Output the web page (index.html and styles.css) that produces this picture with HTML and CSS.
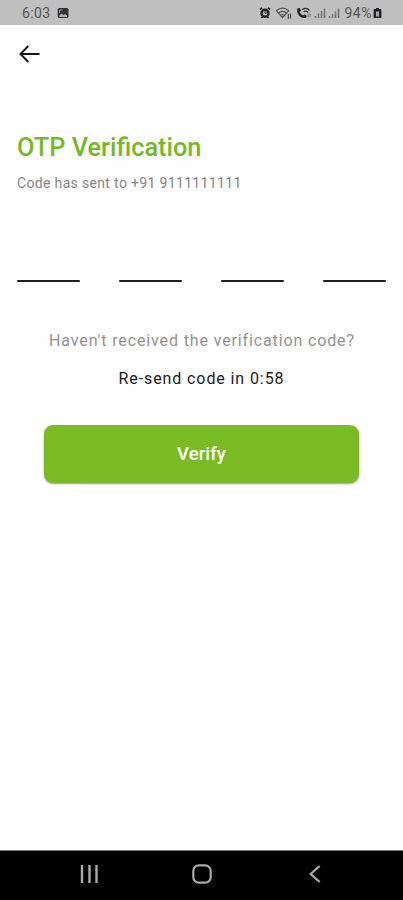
FILE: index.html
```html
<!DOCTYPE html>
<html lang="en">
<head>
<meta charset="utf-8">
<meta name="viewport" content="width=device-width, initial-scale=1">
<title>OTP Verification</title>
<link rel="stylesheet" href="styles.css">
</head>
<body>
<div class="screen">
  <header class="status">
    <span class="clock">6:03</span>
    <svg class="photo" width="12" height="12" viewBox="0 0 12 12"><rect x=".7" y="1" width="10.800" height="10" rx="1.600" fill="#333"/><path d="M2.300 8.500 4.500 6.500l2 1.500 1.700-1 1.800 1.600V10H2.300z" fill="#b0b0b0"/><path d="M2.600 6V3h3" fill="none" stroke="#999"/></svg>
    <svg class="indicators" width="82" height="14" viewBox="0 0 82 14">
      <g fill="none" stroke="#252525">
        <circle cx="6" cy="7.2" r="3.5" stroke-width="2.4"/>
        <path d="M1 3.5 3 2M11 3.5 9 2M2.5 12l1.3-1.3M9.500 12l-1.300-1.300" stroke-width="1.7"/>
        <path d="M6 5.200v2.300l1.700-.8" stroke-width="1"/>
      </g>
      <g fill="none" stroke="#555" stroke-width="1.200">
        <path d="M17.200 4.700q6.300-5 12.600 0M19.200 7.200q4.300-3.500 8.600 0M21.500 9.500q2-1.700 4 0M17.200 4.700l6.300 6.800 6.300-6.800"/>
        <path d="M29.300 8v5M31.500 7.500v5" stroke="#444"/>
      </g>
      <path d="M38.300 2.600 40.500 2l1.500 2.600-1.400 1.400q1 2.400 3.300 3.500l1.500-1.300 2.400 1.600-.8 2.200q-4.800.7-7.500-3.200-2-2.800-1.200-6.200z" fill="#222"/>
      <path d="M43 3.500q5-2.500 7.500 1M44.500 5.700q3-1.300 4.700.8" fill="none" stroke="#333" stroke-width="1.300"/>
      <path d="M49 8v3.500M51 7v4.500" fill="none" stroke="#777"/>
      <g fill="none" stroke="#707070" stroke-width="1.500">
        <path d="M56.500 12v-2M59.500 12V7.500M62.500 12V5M65.500 12V2.500"/>
        <path d="M70.500 12v-2M73.500 12V8M76.500 12V5.500M79.500 12V2.500"/>
      </g>
    </svg>
    <span class="percent">94%</span>
    <svg class="battery" width="9" height="12" viewBox="0 0 9 12"><path d="M3 1h3v1h1.500q.9 0 .9.700v7.600q0 .7-.7.700h-6.400q-.7 0-.7-.7V2.700q0-.7.700-.7H3z" fill="#222"/><path d="M3 4.500h3v5H3z" fill="#aaa"/></svg>
  </header>
  <main class="content">
    <button class="back" aria-label="Back"><svg width="22" height="18" viewBox="0 0 22 18" fill="none" stroke="#111" stroke-width="1.900"><path d="M20.500 9H1.800M9.300 1 1.500 9l7.800 8"/></svg></button>
    <h1>OTP Verification</h1>
    <p class="sent">Code has sent to +91 9111111111</p>
    <div class="digits"><span></span><span></span><span></span><span></span></div>
    <p class="question"><span>Haven't received the verification code?</span></p>
    <p class="resend"><span>Re-send code in 0:58</span></p>
    <button class="verify">Verify</button>
  </main>
  <nav class="navbar">
    <svg width="18" height="18" viewBox="0 0 18 18" stroke="#aaa" stroke-width="2.400"><path d="M2 0v18M9.500 0v18M16.500 0v18"/></svg>
    <svg width="20" height="20" viewBox="0 0 20 20" fill="none" stroke="#aaa" stroke-width="2.200"><rect x="1.300" y="1.300" width="17.400" height="17.400" rx="5.500"/></svg>
    <svg width="12" height="18" viewBox="0 0 12 18" fill="none" stroke="#aaa" stroke-width="2.300"><path d="M10.700 1 1.700 9l9 8"/></svg>
  </nav>
</div>
</body>
</html>
```
FILE: styles.css
```css
* { box-sizing: border-box; }
body { margin: 0; font-family: Roboto, "Liberation Sans", sans-serif; background: #fefefe; }
h1, p { margin: 0; white-space: nowrap; }
button { border: 0; padding: 0; font-family: inherit; }
svg { display: block; flex: none; }
.screen { width: 100%; height: 900px; display: flex; flex-direction: column; background: #fefefe; }
.status { height: 25px; flex: none; display: flex; align-items: center; padding: 1px 21px 0 22px; background: #bfbfbf; color: #555; font-size: 14px; }
.clock { letter-spacing: .4px; }
.photo { margin-left: 6px; }
.indicators { margin-left: auto; }
.percent { margin-left: 4px; letter-spacing: .5px; }
.battery { margin-left: 1px; }
.content { flex: 1; display: flex; flex-direction: column; padding: 20px 17px 0; }
.back { width: 22px; height: 18px; margin-left: 2px; background: none; }
h1 { margin-top: 69px; height: 32px; line-height: 32px; font-size: 25.300px; font-weight: 500; color: #76b82a; }
.sent { margin-top: 9px; height: 20px; line-height: 20px; font-size: 14px; letter-spacing: .34px; color: #858585; }
.digits { display: flex; justify-content: space-between; margin-top: 87px; }
.digits span { width: 63px; height: 2px; border-radius: 1px; background: #20221f; }
.question { margin-top: 49px; height: 20px; line-height: 20px; text-align: center; font-size: 16px; letter-spacing: .87px; color: #929292; }
.question span { margin-right: -1px; }
.resend { margin-top: 18px; height: 20px; line-height: 20px; text-align: center; font-size: 16px; letter-spacing: .9px; color: #1c1c1c; }
.verify { align-self: center; width: 315px; height: 58px; margin-top: 36px; border-radius: 9px; background: #7aba24; color: #fff; font-size: 18.500px; font-weight: 500; letter-spacing: .1px; box-shadow: 0 1px 2px #0006; }
.navbar { height: 50px; flex: none; display: flex; justify-content: space-between; align-items: center; padding: 0 82px 3px 80px; border-top: 1px solid #777; background: #000; }
.navbar svg:nth-child(2) { margin: 0 2px 0 -2px; }
```
